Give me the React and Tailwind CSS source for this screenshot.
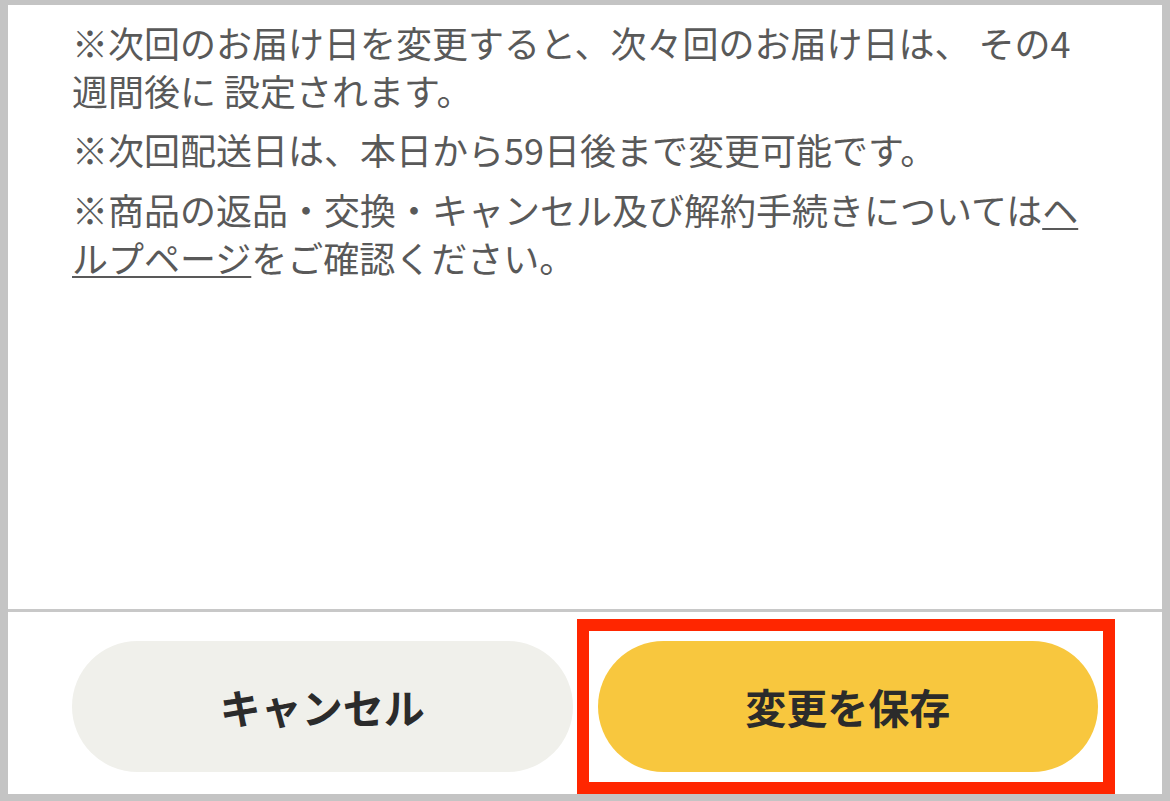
export default function App() {
  return (
    <div
      className="h-[801px] w-[1170px] bg-[#c4c4c4] pt-[5px] px-[8px] pb-[7px]"
      style={{ fontFamily: '"Noto Sans CJK JP", "Noto Sans", sans-serif' }}
    >
      <div className="flex h-full flex-col bg-white">
        <div className="flex-1 px-16 pt-[13px] text-[36px] leading-[48px] text-[#595959]">
          <p>※次回のお届け日を変更すると、次々回のお届け日は、 その4週間後に 設定されます。</p>
          <p className="mt-[11px]">※次回配送日は、本日から59日後まで変更可能です。</p>
          <p className="mt-[12px]">
            ※商品の返品・交換・キャンセル及び解約手続きについては
            <a href="#" className="underline underline-offset-[3px] decoration-[2px]">ヘルプページ</a>
            をご確認ください。
          </p>
        </div>
        <div className="flex gap-[25px] border-t-[3px] border-[#c8c8c8] px-16 pt-[29px] pb-[22px]">
          <button
            type="button"
            className="flex h-[131px] flex-1 items-center justify-center rounded-full bg-[#f0f0eb] text-[41px] font-bold text-[#2b2b2b]"
          >
            キャンセル
          </button>
          <div className="relative flex-1">
            <button
              type="button"
              className="flex h-[131px] w-full items-center justify-center rounded-full bg-[#f8c73e] text-[41px] font-bold text-[#2b2b2b]"
            >
              変更を保存
            </button>
            <div className="pointer-events-none absolute -top-[22px] -bottom-[22px] -left-[21px] -right-[17px] border-[12px] border-[#ff2600]" />
          </div>
        </div>
      </div>
    </div>
  );
}
